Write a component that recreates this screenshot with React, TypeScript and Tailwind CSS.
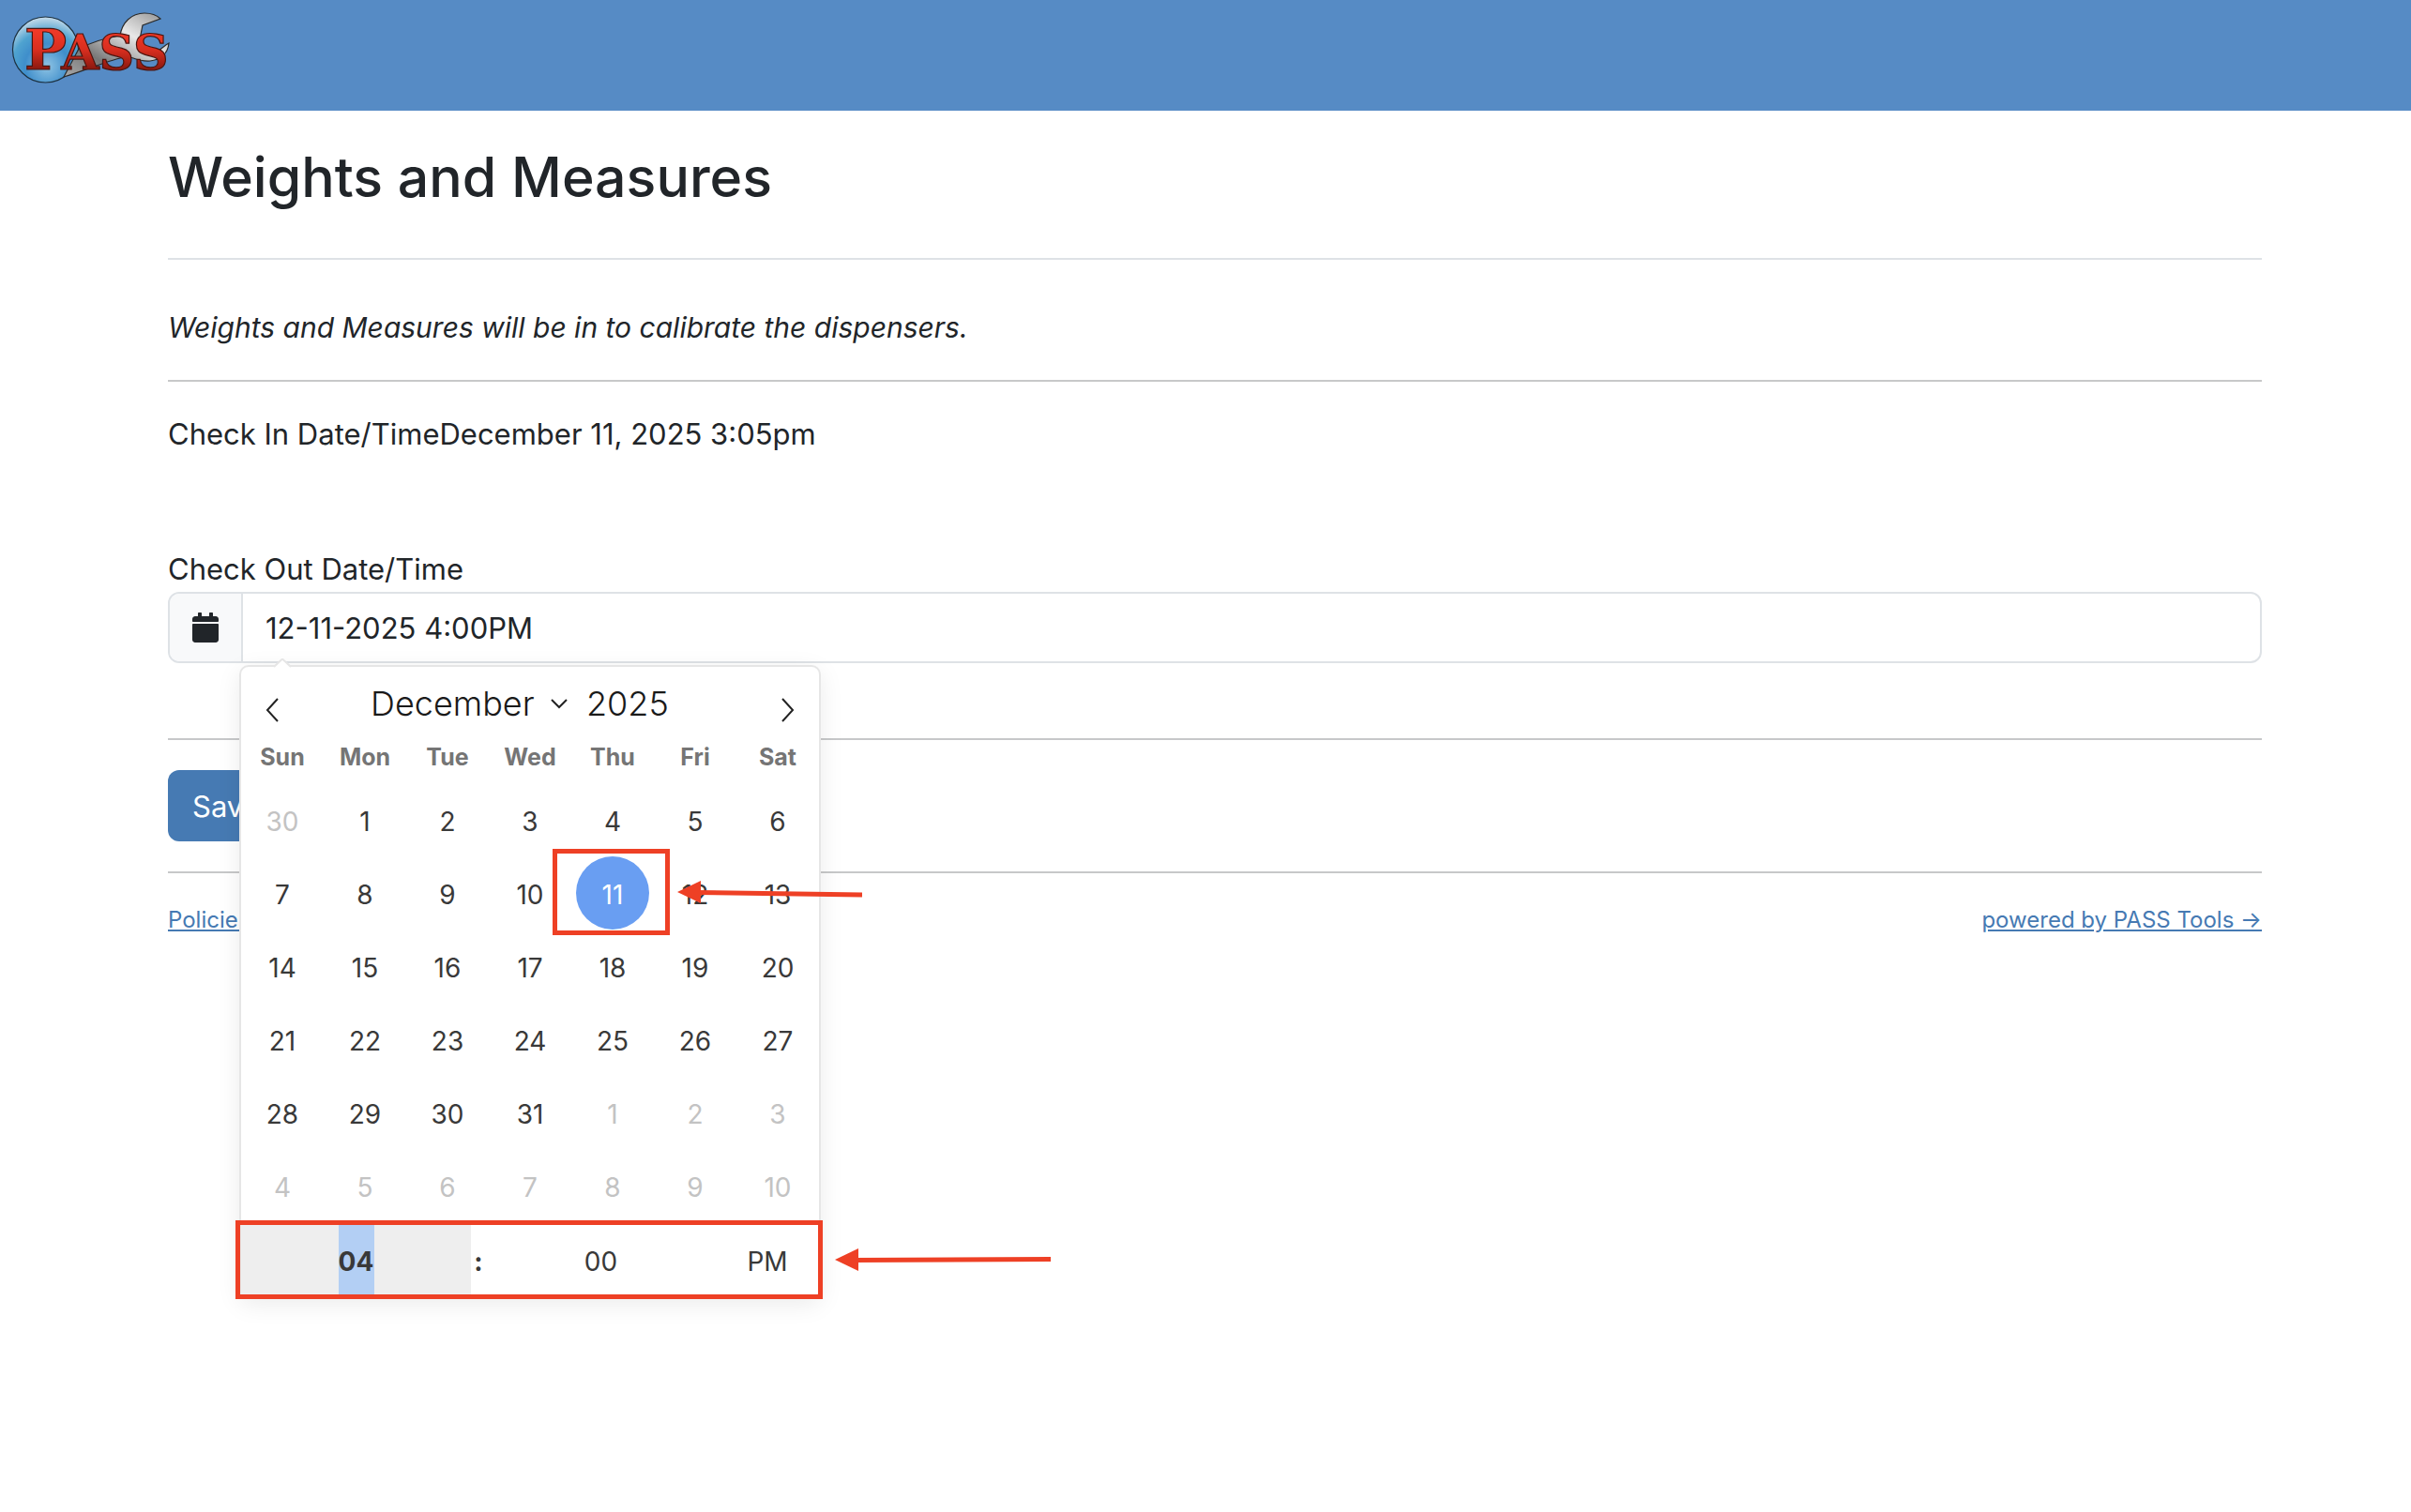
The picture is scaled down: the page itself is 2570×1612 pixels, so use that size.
import { FaCalendar } from "react-icons/fa";

const WEEKDAYS = ["Sun", "Mon", "Tue", "Wed", "Thu", "Fri", "Sat"];
const SELECTED = 11;

interface Day {
  num: number;
  outside: boolean;
}

const days: Day[] = [
  { num: 30, outside: true },
  ...Array.from({ length: 31 }, (_, i) => ({ num: i + 1, outside: false })),
  ...Array.from({ length: 10 }, (_, i) => ({ num: i + 1, outside: true })),
];

function Logo() {
  return (
    <svg width="200" height="100" viewBox="0 0 200 100" aria-label="PASS">
      <defs>
        <radialGradient id="globe" cx="0.52" cy="0.75" r="0.75">
          <stop offset="0" stopColor="#8fc4e4" />
          <stop offset="0.45" stopColor="#3f8ecb" />
          <stop offset="0.7" stopColor="#4fa3d0" />
          <stop offset="1" stopColor="#c9dcea" />
        </radialGradient>
        <linearGradient id="red" x1="0" y1="0" x2="0" y2="1">
          <stop offset="0.2" stopColor="#f03a28" />
          <stop offset="0.5" stopColor="#d92e1f" />
          <stop offset="0.85" stopColor="#7d150d" />
        </linearGradient>
        <linearGradient id="steel" x1="0" y1="1" x2="1" y2="0">
          <stop offset="0" stopColor="#a9a9a9" />
          <stop offset="0.3" stopColor="#777777" />
          <stop offset="0.65" stopColor="#e8e8e8" />
          <stop offset="1" stopColor="#8d8d8d" />
        </linearGradient>
      </defs>
      <circle cx="48.500" cy="53" r="35" fill="url(#globe)" stroke="#1c3140" strokeWidth="1.200" />
      <path
        d="M68 82 L84 52 C100 44 115 40 128 38 C130 24 140 14 154 14 C162 14 168 17 171 20 L152 27 L149 42 C150 53 156 57 164 56 C171 54 174 49 180 46 C179 58 170 64 160 65 C150 66 143 62 136 60 C116 64 94 74 68 82 Z"
        fill="url(#steel)"
        stroke="#2a2a2a"
        strokeWidth="1.200"
      />
      <text
        x="26"
        y="74"
        fill="url(#red)"
        stroke="#4a1510"
        strokeWidth="1.200"
        fontFamily="'DejaVu Serif', serif"
        fontWeight="700"
        fontSize="60"
      >
        P<tspan fontSize="52" dx="-6">ASS</tspan>
      </text>
    </svg>
  );
}

function Divider() {
  return <hr className="border-t-2 border-[#c7c8c9]" />;
}

function TimeRow() {
  return (
    <div className="relative flex h-20 border-t-2 border-[#e6e6e6] text-[28px] text-[#393939]">
      <input
        aria-label="Hour"
        defaultValue="04"
        className="w-[245px] bg-[#eeeeee] bg-[linear-gradient(#b3cff4,#b3cff4)] bg-[length:38px_100%] bg-center bg-no-repeat pt-0.5 text-center font-bold outline-none"
      />
      <span className="flex w-4 items-center justify-center pt-0.5 font-bold">:</span>
      <input aria-label="Minute" defaultValue="00" className="w-[245px] pt-0.5 text-center outline-none" />
      <button type="button" className="flex-1 pt-0.5 text-center">PM</button>

      {/* highlight */}
      <div className="pointer-events-none absolute -top-1 -bottom-0.5 -left-1.5 -right-1 border-[5px] border-[#ee4025]" />
      <svg className="absolute top-6 left-[633px]" width="230" height="28" viewBox="0 0 230 28">
        <path d="M20 14.500 L230 13.500" stroke="#ee4025" strokeWidth="5" />
        <path d="M0 14 L25 2 V26 Z" fill="#ee4025" />
      </svg>
    </div>
  );
}

function DayCell({ day }: { day: Day }) {
  if (!day.outside && day.num === SELECTED) {
    return (
      <div className="relative size-[78px]">
        <button type="button" className="size-full rounded-full bg-[#699ef2] pt-1 text-white">
          {day.num}
        </button>
        <div className="pointer-events-none absolute -top-2 -bottom-1.5 -right-[22px] -left-[25px] border-[5px] border-[#ee4025]" />
        <svg className="absolute top-6 left-[108px] z-10" width="198" height="30" viewBox="0 0 198 30">
          <path d="M20 14.500 L197 17" stroke="#ee4025" strokeWidth="5" />
          <path d="M0 14 L25 2 V26 Z" fill="#ee4025" />
        </svg>
      </div>
    );
  }

  return (
    <button
      type="button"
      className={`size-[78px] rounded-full pt-1 ${day.outside ? "text-[#c3c3c3]" : "text-[#393939]"}`}
    >
      {day.num}
    </button>
  );
}

function DatePicker() {
  return (
    <div className="absolute top-full left-[74px] z-10 mt-1 w-[620px] rounded-[10px] border-2 border-[#e6e6e6] bg-white shadow-[0_6px_26px_rgba(0,0,0,0.08)]">
      <svg className="absolute -top-[9px] left-[35px]" width="18" height="10" viewBox="0 0 18 10">
        <path d="M0 9 L9 0 L18 9 V10 H0 Z" fill="#ffffff" />
        <path d="M0 9 L9 0.500 L18 9" fill="none" stroke="#e6e6e6" strokeWidth="2" />
      </svg>

      {/* month bar */}
      <div className="flex h-[68px] items-end text-[36px] font-light text-[#1a1a1a]">
        <button type="button" aria-label="Previous month" className="flex h-11 w-[66px] items-center justify-center">
          <svg width="14" height="26" viewBox="0 0 14 26" fill="none" stroke="#222222" strokeWidth="2">
            <path d="M13 1 L2 13 L13 25" />
          </svg>
        </button>
        <div className="flex h-[58px] flex-1 items-center justify-center gap-5">
          <div className="relative w-[210px]">
            <select aria-label="Month" defaultValue="December" className="w-full appearance-none outline-none">
              <option>December</option>
            </select>
            <svg
              className="pointer-events-none absolute top-[18px] right-0"
              width="18"
              height="12"
              viewBox="0 0 18 12"
              fill="none"
              stroke="#222222"
              strokeWidth="2"
            >
              <path d="M1 2 L9 10 L17 2" />
            </svg>
          </div>
          <input aria-label="Year" defaultValue="2025" className="w-[110px] outline-none" />
        </div>
        <button type="button" aria-label="Next month" className="flex h-11 w-[66px] items-center justify-center">
          <svg width="14" height="26" viewBox="0 0 14 26" fill="none" stroke="#222222" strokeWidth="2">
            <path d="M1 1 L12 13 L1 25" />
          </svg>
        </button>
      </div>

      <div className="grid h-14 grid-cols-7 items-center text-center text-[25px] font-bold text-[#757575]">
        {WEEKDAYS.map((name) => (
          <span key={name}>{name}</span>
        ))}
      </div>

      <div className="grid grid-cols-7 justify-items-center text-[28px]">
        {days.map((day, i) => (
          <DayCell key={i} day={day} />
        ))}
      </div>

      <TimeRow />
    </div>
  );
}

export default function App() {
  return (
    <div className="min-h-screen bg-white font-[Inter,sans-serif] text-[31px] leading-[48px] text-[#212529]">
      <header className="h-[118px] bg-[#568bc5]">
        <Logo />
      </header>

      <main className="pt-8 pr-[159px] pl-[179px]">
        <h1 className="mb-12 text-[59px] leading-[77px] font-medium">Weights and Measures</h1>
        <hr className="border-t-2 border-[#dee2e6]" />

        <p className="mt-12 mb-8 text-[30px] italic">
          Weights and Measures will be in to calibrate the dispensers.
        </p>
        <Divider />

        <div className="mt-8 mb-24">
          <span>Check In Date/Time</span>
          <span>December 11, 2025 3:05pm</span>
        </div>

        <label htmlFor="checkout" className="block">
          Check Out Date/Time
        </label>
        <div className="relative mb-20 flex h-[76px] rounded-xl border-2 border-[#dee2e6]">
          <span className="flex w-[78px] items-center justify-center rounded-l-[10px] border-r-2 border-[#dee2e6] bg-[#f8f9fa]">
            <FaCalendar size={32} />
          </span>
          <input
            id="checkout"
            defaultValue="12-11-2025 4:00PM"
            className="min-w-0 flex-1 rounded-r-[10px] px-6 pt-0.5 outline-none"
          />
          <DatePicker />
        </div>
        <Divider />

        <button type="button" className="my-8 block h-[76px] rounded-xl bg-[#467ab3] px-[26px] pt-0.5 text-white">
          Save
        </button>
        <Divider />

        <footer className="mt-8 flex justify-between text-[24px] leading-9 text-[#467ab3]">
          <a href="#policies" className="underline">Policies</a>
          <a href="#pass-tools" className="underline">powered by PASS Tools →</a>
        </footer>
      </main>
    </div>
  );
}
